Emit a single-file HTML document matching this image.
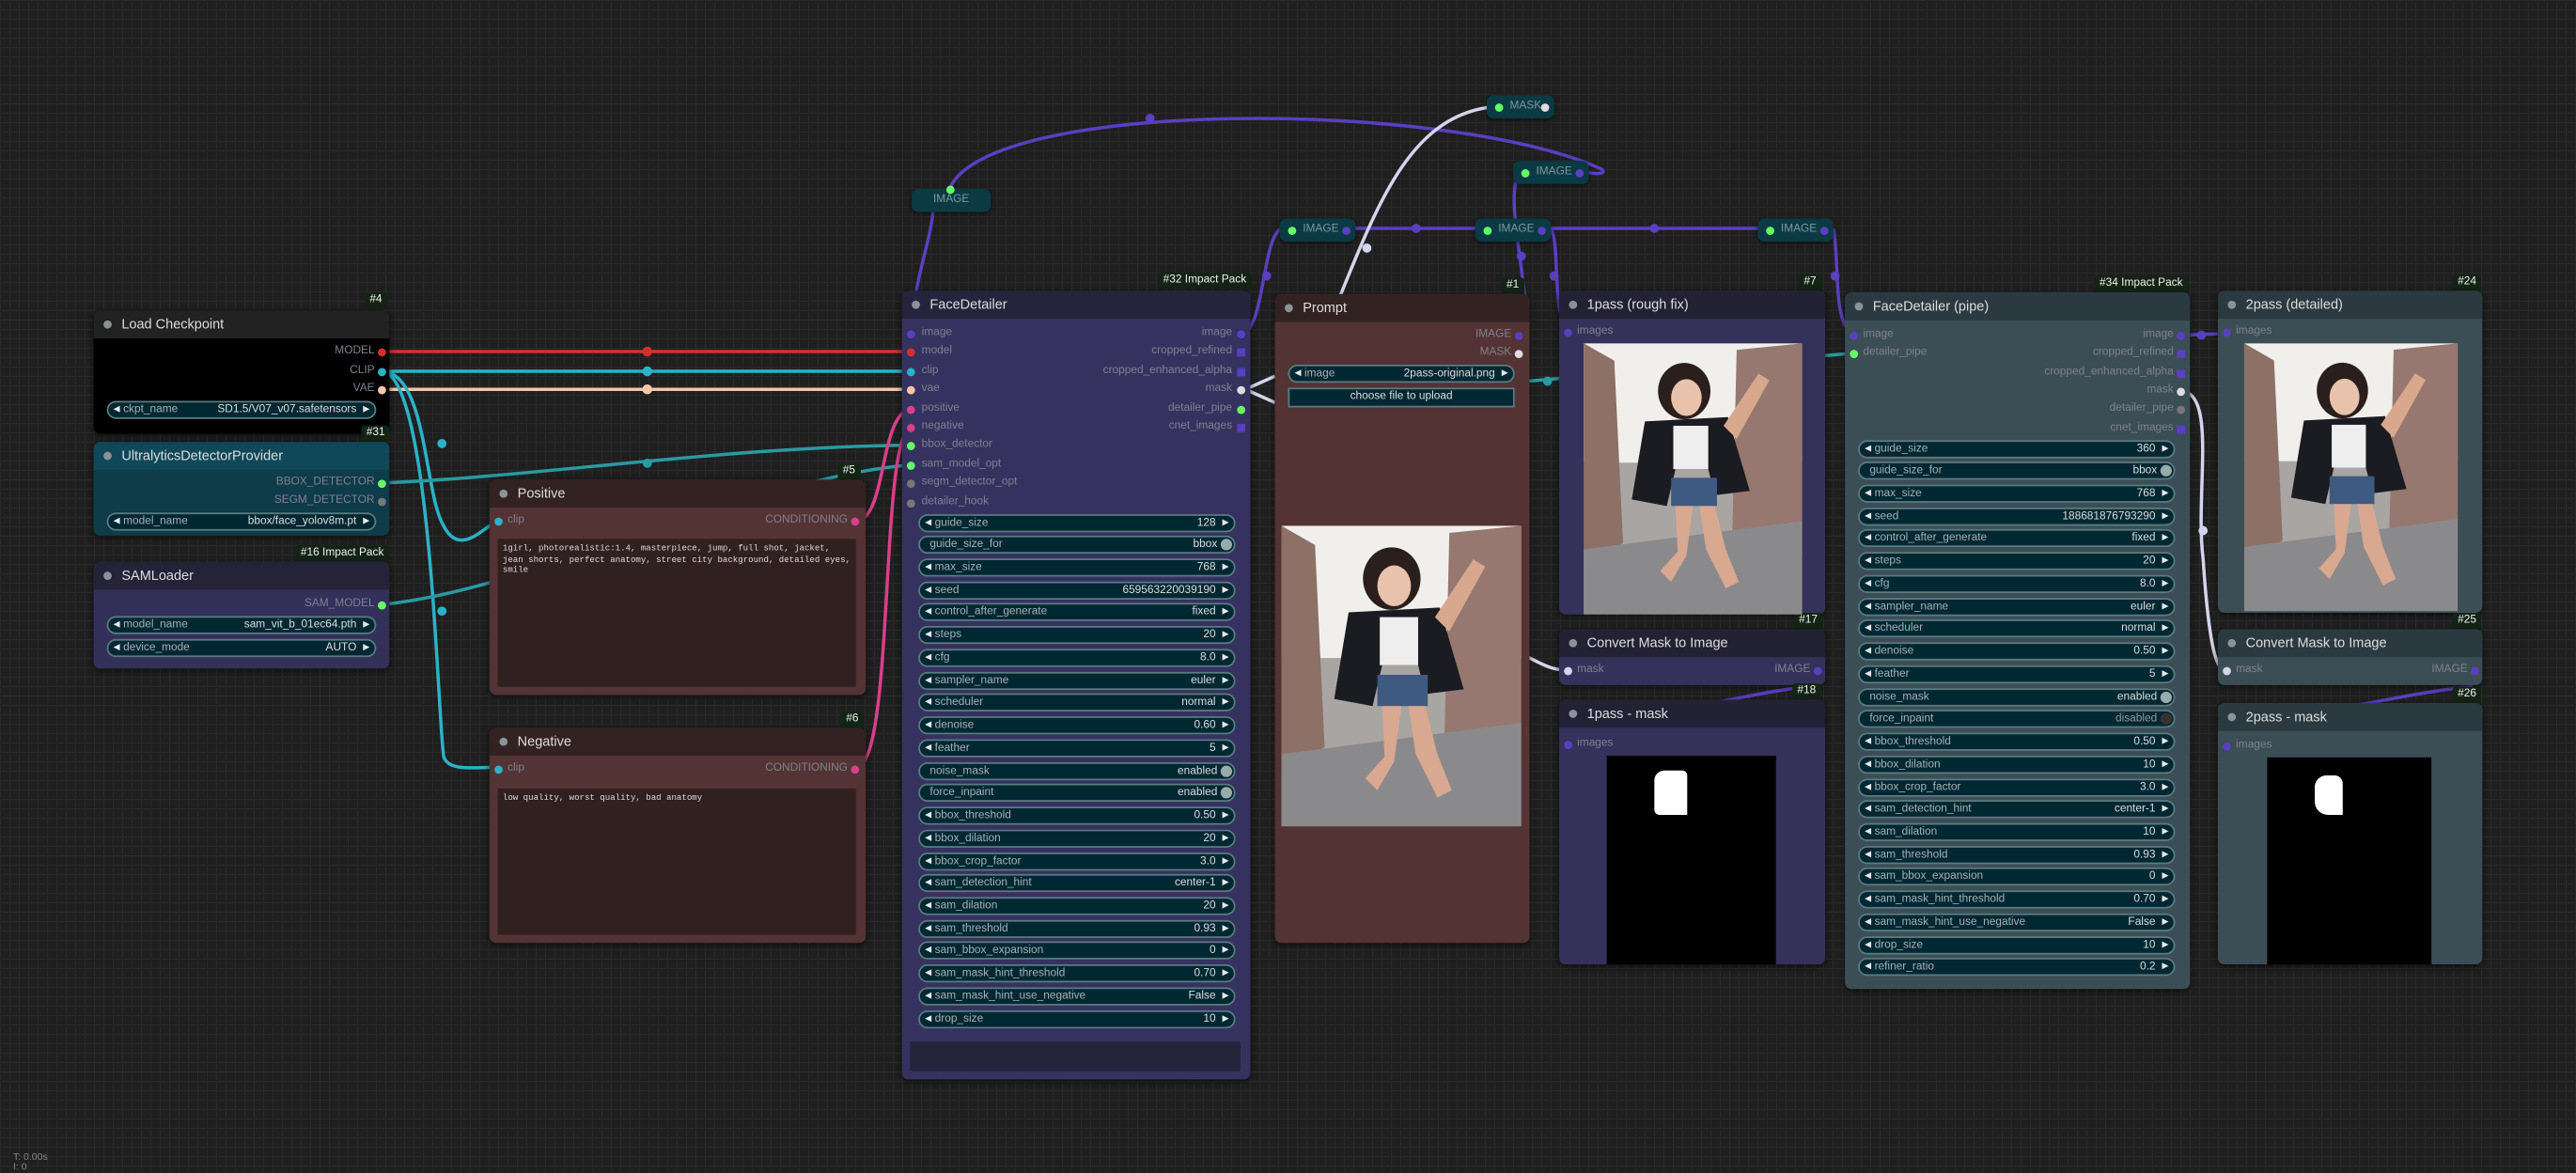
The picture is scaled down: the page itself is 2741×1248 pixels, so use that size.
<!DOCTYPE html>
<html><head><meta charset="utf-8"><style>
html,body{margin:0;padding:0;width:2741px;height:1248px;overflow:hidden;background:#202020}
body{background-color:#1f1f1f;background-image:linear-gradient(#292929 1px,transparent 1px),linear-gradient(90deg,#292929 1px,transparent 1px);background-size:10px 10px}
#c{position:absolute;left:0;top:0;width:1568px;height:714px;transform:scale(1.74809,1.74790);transform-origin:0 0;font-family:"Liberation Sans",sans-serif}
.n{position:absolute;border-radius:4px;overflow:hidden;box-shadow:0 1px 4px rgba(0,0,0,.6)}
.t{position:absolute;left:0;right:0;top:0;height:17px;font-size:8.3px;line-height:17px;color:#ddd;padding-left:17px;box-sizing:border-box;white-space:nowrap}
.t:before{content:"";position:absolute;left:6px;top:6px;width:5px;height:5px;border-radius:50%;background:#8a9496}
.b{position:absolute;left:0;right:0;top:17px;bottom:0}
.bd{position:absolute;height:10px;padding:0 3px;font-size:6.8px;line-height:10px;color:#eee;background:#142414;border-radius:2px 2px 0 0;white-space:nowrap}
.s{position:absolute;font-size:6.8px;line-height:8px;color:#80808e;white-space:nowrap}
.d{position:absolute;width:5px;height:5px;border-radius:50%;top:1.5px}
.w{position:absolute;height:11px;border:1px solid #5c7b80;border-radius:6px;background:#002833;box-sizing:border-box;font-size:6.8px;line-height:9px;color:#a8b0b4;white-space:nowrap}
.w .l{position:absolute;left:9px}.w .v{position:absolute;right:11px;color:#ddd}
.w.tg .l{left:6px}.w.tg .v{right:10px}
.la{position:absolute;left:3px;top:2px;width:0;height:0;border-right:4px solid #e8e8e8;border-top:2.5px solid transparent;border-bottom:2.5px solid transparent}
.ra{position:absolute;right:3px;top:2px;width:0;height:0;border-left:4px solid #e8e8e8;border-top:2.5px solid transparent;border-bottom:2.5px solid transparent}
.k{position:absolute;right:1.5px;top:1px;width:7px;height:7px;border-radius:50%;background:#9aa}
.rr{position:absolute;height:14px;border-radius:4px;background:#0b3a45;font-size:6.8px;line-height:14px;color:#7d969c;box-shadow:0 1px 3px rgba(0,0,0,.5)}
.img{position:absolute}
</style></head><body><div id="c">

<svg width="1568" height="714" style="position:absolute;left:0;top:0" fill="none" stroke-width="2">
<path d="M232 214 L555 214" stroke="#d43030"/><circle cx="394" cy="214" r="3" fill="#d43030"/>
<path d="M232 226 L555 226" stroke="#2ab3c8"/><circle cx="394" cy="226" r="3" fill="#2ab3c8"/>
<path d="M232 237 L555 237" stroke="#f3c8a8"/><circle cx="394" cy="237" r="3" fill="#f3c8a8"/>
<path d="M232 226 C260 226 258 300 270 320 C280 340 295 320 303 317" stroke="#2ab3c8"/><circle cx="269" cy="270" r="2.8" fill="#2ab3c8"/>
<path d="M232 226 C262 226 266 430 270 460 C272 470 290 467 303 467" stroke="#2ab3c8"/><circle cx="269" cy="372" r="2.8" fill="#2ab3c8"/>
<path d="M232 294 C330 290 440 272 555 271" stroke="#2a9aa2"/><circle cx="394" cy="282" r="2.8" fill="#2a9aa2"/>
<path d="M232 368 C320 360 460 290 555 283" stroke="#2a9aa2"/>
<path d="M521 317 C540 317 535 250 555 249" stroke="#d8408a"/>
<path d="M521 467 C545 467 535 262 555 260" stroke="#d8408a"/>
<path d="M578 115 C600 60 880 60 975 103 C978 106 972 106 967 105" stroke="#5a3fc0"/><circle cx="700" cy="72" r="2.8" fill="#5a3fc0"/>
<path d="M568 128 C566 150 556 170 555 203" stroke="#5a3fc0"/>
<path d="M756 203 C770 200 768 145 780 139" stroke="#5a3fc0"/><circle cx="771" cy="168" r="2.8" fill="#5a3fc0"/>
<path d="M824 139 L898 139" stroke="#5a3fc0"/><circle cx="862" cy="139" r="2.8" fill="#5a3fc0"/>
<path d="M944 139 L1070 139" stroke="#5a3fc0"/><circle cx="1007" cy="139" r="2.8" fill="#5a3fc0"/>
<path d="M924 106 C918 120 925 150 928 180 C930 195 928 204 926 204" stroke="#5a3fc0"/><circle cx="926" cy="156" r="2.8" fill="#5a3fc0"/>
<path d="M944 139 C950 150 944 190 955 203" stroke="#5a3fc0"/><circle cx="946" cy="168" r="2.8" fill="#5a3fc0"/>
<path d="M1116 139 C1120 160 1115 195 1128 204" stroke="#5a3fc0"/><circle cx="1117" cy="168" r="2.8" fill="#5a3fc0"/>
<path d="M1327 204 L1355 203" stroke="#5a3fc0"/><circle cx="1340" cy="204" r="2.8" fill="#5a3fc0"/>
<path d="M1505 418 C1480 420 1460 425 1430 430" stroke="#5a3fc0"/>
<path d="M1100 418 C1080 420 1060 425 1030 430" stroke="#5a3fc0"/>
<path d="M909 65 C860 70 840 120 815 182" stroke="#d4d4ec"/><circle cx="832" cy="151" r="2.8" fill="#d4d4ec"/>
<path d="M776 229 L758 237 L776 245" stroke="#d4d4ec"/>
<path d="M1327 238 C1350 238 1336 300 1341 340 C1345 400 1350 408 1355 408" stroke="#d4d4ec"/><circle cx="1341" cy="323" r="2.8" fill="#d4d4ec"/>
<path d="M930 400 C940 405 945 408 955 408" stroke="#d4d4ec"/>
<path d="M930 232 L1128 215" stroke="#2a9aa2"/><circle cx="942" cy="232" r="2.8" fill="#2a9aa2"/>
</svg>

<div class="rr" style="left:555px;top:115px;width:48px;text-align:center">IMAGE</div>
<div class="rr" style="left:905px;top:58px;width:41px;padding-left:14px;box-sizing:border-box">MASK<span class="d" style="left:5px;top:4.5px;background:#6f6"></span><span class="d" style="right:3px;top:4.5px;background:#ddd"></span></div>
<div class="rr" style="left:921px;top:98px;width:46px;padding-left:14px;box-sizing:border-box">IMAGE<span class="d" style="left:5px;top:4.5px;background:#6f6"></span><span class="d" style="right:3px;top:4.5px;background:#5a3fc0"></span></div>
<div class="rr" style="left:779px;top:133px;width:46px;padding-left:14px;box-sizing:border-box">IMAGE<span class="d" style="left:5px;top:4.5px;background:#6f6"></span><span class="d" style="right:3px;top:4.5px;background:#5a3fc0"></span></div>
<div class="rr" style="left:898px;top:133px;width:46px;padding-left:14px;box-sizing:border-box">IMAGE<span class="d" style="left:5px;top:4.5px;background:#6f6"></span><span class="d" style="right:3px;top:4.5px;background:#5a3fc0"></span></div>
<div class="rr" style="left:1070px;top:133px;width:46px;padding-left:14px;box-sizing:border-box">IMAGE<span class="d" style="left:5px;top:4.5px;background:#6f6"></span><span class="d" style="right:3px;top:4.5px;background:#5a3fc0"></span></div>
<span class="d" style="left:575.5px;top:112.5px;background:#6f6"></span>

<div class="bd" style="left:222px;top:178px">#4</div>
<div class="n" style="left:57px;top:189px;width:180px;height:75px;background:#000"><div class="t" style="background:#222">Load Checkpoint</div></div>
<div class="s" style="right:1340px;top:210px">MODEL</div><span class="d" style="left:230px;top:211.5px;background:#d43030"></span>
<div class="s" style="right:1340px;top:222px">CLIP</div><span class="d" style="left:230px;top:223.5px;background:#2ab3c8"></span>
<div class="s" style="right:1340px;top:233px">VAE</div><span class="d" style="left:230px;top:234.5px;background:#f3c8a8"></span>
<div class="w" style="left:65px;top:243.5px;width:164px"><i class="la"></i><span class="l">ckpt_name</span><span class="v">SD1.5/V07_v07.safetensors</span><i class="ra"></i></div>

<div class="bd" style="left:220px;top:259px">#31</div>
<div class="n" style="left:57px;top:269px;width:180px;height:57px;background:#0e3c48"><div class="t" style="background:#0f4858">UltralyticsDetectorProvider</div></div>
<div class="s" style="right:1340px;top:290px">BBOX_DETECTOR</div><span class="d" style="left:230px;top:291.5px;background:#6f6"></span>
<div class="s" style="right:1340px;top:301px">SEGM_DETECTOR</div><span class="d" style="left:230px;top:302.5px;background:#777"></span>
<div class="w" style="left:65px;top:312px;width:164px"><i class="la"></i><span class="l">model_name</span><span class="v">bbox/face_yolov8m.pt</span><i class="ra"></i></div>

<div class="bd" style="left:180px;top:332px">#16 Impact Pack</div>
<div class="n" style="left:57px;top:342px;width:180px;height:65px;background:#33305a"><div class="t" style="background:#242338">SAMLoader</div></div>
<div class="s" style="right:1340px;top:364px">SAM_MODEL</div><span class="d" style="left:230px;top:365.5px;background:#6f6"></span>
<div class="w" style="left:65px;top:375px;width:164px"><i class="la"></i><span class="l">model_name</span><span class="v">sam_vit_b_01ec64.pth</span><i class="ra"></i></div>
<div class="w" style="left:65px;top:389px;width:164px"><i class="la"></i><span class="l">device_mode</span><span class="v">AUTO</span><i class="ra"></i></div>

<div class="bd" style="left:510px;top:282px">#5</div>
<div class="n" style="left:298px;top:292px;width:229px;height:131px;background:#533333"><div class="t" style="background:#332222">Positive</div>
<div style="position:absolute;left:5px;top:36px;width:218px;height:90px;background:#302020;color:#ddd;font-family:'Liberation Mono',monospace;font-size:5.2px;line-height:6.5px;padding:3px;box-sizing:border-box">1girl, photorealistic:1.4, masterpiece, jump, full shot, jacket, jean shorts, perfect anatomy, street city background, detailed eyes, smile</div></div>
<span class="d" style="left:301px;top:314.5px;background:#2ab3c8"></span><div class="s" style="left:309px;top:313px">clip</div>
<div class="s" style="right:1052px;top:313px">CONDITIONING</div><span class="d" style="left:518px;top:314.5px;background:#d8408a"></span>

<div class="bd" style="left:512px;top:433px">#6</div>
<div class="n" style="left:298px;top:443px;width:229px;height:131px;background:#533333"><div class="t" style="background:#332222">Negative</div>
<div style="position:absolute;left:5px;top:37px;width:218px;height:89px;background:#302020;color:#ddd;font-family:'Liberation Mono',monospace;font-size:5.2px;line-height:6.5px;padding:3px;box-sizing:border-box">low quality, worst quality, bad anatomy</div></div>
<span class="d" style="left:301px;top:465.5px;background:#2ab3c8"></span><div class="s" style="left:309px;top:464px">clip</div>
<div class="s" style="right:1052px;top:464px">CONDITIONING</div><span class="d" style="left:518px;top:465.5px;background:#d8408a"></span>

<div class="bd" style="left:705px;top:166px">#32 Impact Pack</div>
<div class="n" style="left:549px;top:177px;width:212px;height:480px;background:#353260"><div class="t" style="background:#25243c">FaceDetailer</div>
<div style="position:absolute;left:5px;top:457px;width:201px;height:18px;background:#25233a"></div></div>
<span class="d" style="left:552px;top:200.5px;background:#5a3fc0"></span><div class="s" style="left:561px;top:199px">image</div>
<span class="d" style="left:552px;top:211.5px;background:#d43030"></span><div class="s" style="left:561px;top:210px">model</div>
<span class="d" style="left:552px;top:223.5px;background:#2ab3c8"></span><div class="s" style="left:561px;top:222px">clip</div>
<span class="d" style="left:552px;top:234.5px;background:#f3c8a8"></span><div class="s" style="left:561px;top:233px">vae</div>
<span class="d" style="left:552px;top:246.5px;background:#d8408a"></span><div class="s" style="left:561px;top:245px">positive</div>
<span class="d" style="left:552px;top:257.5px;background:#d8408a"></span><div class="s" style="left:561px;top:256px">negative</div>
<span class="d" style="left:552px;top:268.5px;background:#6f6"></span><div class="s" style="left:561px;top:267px">bbox_detector</div>
<span class="d" style="left:552px;top:280.5px;background:#6f6"></span><div class="s" style="left:561px;top:279px">sam_model_opt</div>
<span class="d" style="left:552px;top:291.5px;background:#777"></span><div class="s" style="left:561px;top:290px">segm_detector_opt</div>
<span class="d" style="left:552px;top:303.5px;background:#777"></span><div class="s" style="left:561px;top:302px">detailer_hook</div>
<div class="s" style="right:818px;top:199px">image</div><span class="d" style="left:753px;top:200.5px;background:#5a3fc0"></span>
<div class="s" style="right:818px;top:210px">cropped_refined</div><span class="d" style="left:753px;top:211.5px;background:#5a3fc0;border-radius:0"></span>
<div class="s" style="right:818px;top:222px">cropped_enhanced_alpha</div><span class="d" style="left:753px;top:223.5px;background:#5a3fc0;border-radius:0"></span>
<div class="s" style="right:818px;top:233px">mask</div><span class="d" style="left:753px;top:234.5px;background:#ddd"></span>
<div class="s" style="right:818px;top:245px">detailer_pipe</div><span class="d" style="left:753px;top:246.5px;background:#6f6"></span>
<div class="s" style="right:818px;top:256px">cnet_images</div><span class="d" style="left:753px;top:257.5px;background:#5a3fc0;border-radius:0"></span>

<div class="w" style="left:559px;top:312.5px;width:193px"><i class="la"></i><span class="l">guide_size</span><span class="v">128</span><i class="ra"></i></div>
<div class="w tg" style="left:559px;top:326.2px;width:193px"><span class="l">guide_size_for</span><span class="v">bbox</span><i class="k"></i></div>
<div class="w" style="left:559px;top:340px;width:193px"><i class="la"></i><span class="l">max_size</span><span class="v">768</span><i class="ra"></i></div>
<div class="w" style="left:559px;top:353.7px;width:193px"><i class="la"></i><span class="l">seed</span><span class="v">659563220039190</span><i class="ra"></i></div>
<div class="w" style="left:559px;top:367.4px;width:193px"><i class="la"></i><span class="l">control_after_generate</span><span class="v">fixed</span><i class="ra"></i></div>
<div class="w" style="left:559px;top:381.2px;width:193px"><i class="la"></i><span class="l">steps</span><span class="v">20</span><i class="ra"></i></div>
<div class="w" style="left:559px;top:394.9px;width:193px"><i class="la"></i><span class="l">cfg</span><span class="v">8.0</span><i class="ra"></i></div>
<div class="w" style="left:559px;top:408.6px;width:193px"><i class="la"></i><span class="l">sampler_name</span><span class="v">euler</span><i class="ra"></i></div>
<div class="w" style="left:559px;top:422.3px;width:193px"><i class="la"></i><span class="l">scheduler</span><span class="v">normal</span><i class="ra"></i></div>
<div class="w" style="left:559px;top:436.1px;width:193px"><i class="la"></i><span class="l">denoise</span><span class="v">0.60</span><i class="ra"></i></div>
<div class="w" style="left:559px;top:449.8px;width:193px"><i class="la"></i><span class="l">feather</span><span class="v">5</span><i class="ra"></i></div>
<div class="w tg" style="left:559px;top:463.5px;width:193px"><span class="l">noise_mask</span><span class="v">enabled</span><i class="k"></i></div>
<div class="w tg" style="left:559px;top:477.3px;width:193px"><span class="l">force_inpaint</span><span class="v">enabled</span><i class="k"></i></div>
<div class="w" style="left:559px;top:491px;width:193px"><i class="la"></i><span class="l">bbox_threshold</span><span class="v">0.50</span><i class="ra"></i></div>
<div class="w" style="left:559px;top:504.7px;width:193px"><i class="la"></i><span class="l">bbox_dilation</span><span class="v">20</span><i class="ra"></i></div>
<div class="w" style="left:559px;top:518.5px;width:193px"><i class="la"></i><span class="l">bbox_crop_factor</span><span class="v">3.0</span><i class="ra"></i></div>
<div class="w" style="left:559px;top:532.2px;width:193px"><i class="la"></i><span class="l">sam_detection_hint</span><span class="v">center-1</span><i class="ra"></i></div>
<div class="w" style="left:559px;top:545.9px;width:193px"><i class="la"></i><span class="l">sam_dilation</span><span class="v">20</span><i class="ra"></i></div>
<div class="w" style="left:559px;top:559.6px;width:193px"><i class="la"></i><span class="l">sam_threshold</span><span class="v">0.93</span><i class="ra"></i></div>
<div class="w" style="left:559px;top:573.4px;width:193px"><i class="la"></i><span class="l">sam_bbox_expansion</span><span class="v">0</span><i class="ra"></i></div>
<div class="w" style="left:559px;top:587.1px;width:193px"><i class="la"></i><span class="l">sam_mask_hint_threshold</span><span class="v">0.70</span><i class="ra"></i></div>
<div class="w" style="left:559px;top:600.8px;width:193px"><i class="la"></i><span class="l">sam_mask_hint_use_negative</span><span class="v">False</span><i class="ra"></i></div>
<div class="w" style="left:559px;top:614.6px;width:193px"><i class="la"></i><span class="l">drop_size</span><span class="v">10</span><i class="ra"></i></div>

<div class="bd" style="left:914px;top:169px">#1</div>
<div class="n" style="left:776px;top:179px;width:155px;height:395px;background:#533333"><div class="t" style="background:#332222">Prompt</div></div>
<div class="s" style="right:648px;top:200px">IMAGE</div><span class="d" style="left:922px;top:201.5px;background:#5a3fc0"></span>
<div class="s" style="right:648px;top:211px">MASK</div><span class="d" style="left:922px;top:212.5px;background:#ddd"></span>
<div class="w" style="left:784px;top:222px;width:138px"><i class="la"></i><span class="l">image</span><span class="v">2pass-original.png</span><i class="ra"></i></div>
<div style="position:absolute;left:784px;top:236px;width:138px;height:12px;background:#002833;border:1px solid #5c7b80;box-sizing:border-box;font-size:6.8px;line-height:10px;color:#ddd;text-align:center">choose file to upload</div>

<div class="bd" style="left:1095px;top:167px">#7</div>
<div class="n" style="left:949px;top:177px;width:162px;height:197px;background:#34325a"><div class="t" style="background:#232234">1pass (rough fix)</div></div>
<span class="d" style="left:952px;top:199.5px;background:#5a3fc0"></span><div class="s" style="left:960px;top:198px">images</div>

<div class="bd" style="left:1092px;top:373px">#17</div>
<div class="n" style="left:949px;top:383px;width:162px;height:34px;background:#34325a"><div class="t" style="background:#232234">Convert Mask to Image</div></div>
<span class="d" style="left:952px;top:405.5px;background:#d4d4ec"></span><div class="s" style="left:960px;top:404px">mask</div>
<div class="s" style="right:466px;top:404px">IMAGE</div><span class="d" style="left:1104px;top:405.5px;background:#5a3fc0"></span>

<div class="bd" style="left:1091px;top:416px">#18</div>
<div class="n" style="left:949px;top:426px;width:162px;height:161px;background:#34325a"><div class="t" style="background:#232234">1pass - mask</div>
<div style="position:absolute;left:29px;top:34px;width:103px;height:127px;background:#000"><div style="position:absolute;left:29px;top:9px;width:20px;height:27px;background:#fff;border-radius:6px 3px 0 3px"></div></div></div>
<span class="d" style="left:952px;top:450.5px;background:#5a3fc0"></span><div class="s" style="left:960px;top:449px">images</div>

<div class="bd" style="left:1275px;top:168px">#34 Impact Pack</div>
<div class="n" style="left:1123px;top:178px;width:210px;height:424px;background:#3b4e56"><div class="t" style="background:#2b3a40">FaceDetailer (pipe)</div></div>
<span class="d" style="left:1126px;top:201.5px;background:#5a3fc0"></span><div class="s" style="left:1134px;top:200px">image</div>
<span class="d" style="left:1126px;top:212.5px;background:#6f6"></span><div class="s" style="left:1134px;top:211px">detailer_pipe</div>
<div class="s" style="right:245px;top:200px">image</div><span class="d" style="left:1325px;top:201.5px;background:#5a3fc0"></span>
<div class="s" style="right:245px;top:211px">cropped_refined</div><span class="d" style="left:1325px;top:212.5px;background:#5a3fc0;border-radius:0"></span>
<div class="s" style="right:245px;top:223px">cropped_enhanced_alpha</div><span class="d" style="left:1325px;top:224.5px;background:#5a3fc0;border-radius:0"></span>
<div class="s" style="right:245px;top:234px">mask</div><span class="d" style="left:1325px;top:235.5px;background:#ddd"></span>
<div class="s" style="right:245px;top:245px">detailer_pipe</div><span class="d" style="left:1325px;top:246.5px;background:#777"></span>
<div class="s" style="right:245px;top:257px">cnet_images</div><span class="d" style="left:1325px;top:258.5px;background:#5a3fc0;border-radius:0"></span>

<div class="w" style="left:1131px;top:267.5px;width:193px"><i class="la"></i><span class="l">guide_size</span><span class="v">360</span><i class="ra"></i></div>
<div class="w tg" style="left:1131px;top:281.2px;width:193px"><span class="l">guide_size_for</span><span class="v">bbox</span><i class="k"></i></div>
<div class="w" style="left:1131px;top:295px;width:193px"><i class="la"></i><span class="l">max_size</span><span class="v">768</span><i class="ra"></i></div>
<div class="w" style="left:1131px;top:308.7px;width:193px"><i class="la"></i><span class="l">seed</span><span class="v">188681876793290</span><i class="ra"></i></div>
<div class="w" style="left:1131px;top:322.4px;width:193px"><i class="la"></i><span class="l">control_after_generate</span><span class="v">fixed</span><i class="ra"></i></div>
<div class="w" style="left:1131px;top:336.2px;width:193px"><i class="la"></i><span class="l">steps</span><span class="v">20</span><i class="ra"></i></div>
<div class="w" style="left:1131px;top:349.9px;width:193px"><i class="la"></i><span class="l">cfg</span><span class="v">8.0</span><i class="ra"></i></div>
<div class="w" style="left:1131px;top:363.6px;width:193px"><i class="la"></i><span class="l">sampler_name</span><span class="v">euler</span><i class="ra"></i></div>
<div class="w" style="left:1131px;top:377.3px;width:193px"><i class="la"></i><span class="l">scheduler</span><span class="v">normal</span><i class="ra"></i></div>
<div class="w" style="left:1131px;top:391.1px;width:193px"><i class="la"></i><span class="l">denoise</span><span class="v">0.50</span><i class="ra"></i></div>
<div class="w" style="left:1131px;top:404.8px;width:193px"><i class="la"></i><span class="l">feather</span><span class="v">5</span><i class="ra"></i></div>
<div class="w tg" style="left:1131px;top:418.5px;width:193px"><span class="l">noise_mask</span><span class="v">enabled</span><i class="k"></i></div>
<div class="w tg" style="left:1131px;top:432.3px;width:193px"><span class="l">force_inpaint</span><span class="v" style="color:#999">disabled</span><i class="k" style="background:#3a3030"></i></div>
<div class="w" style="left:1131px;top:446px;width:193px"><i class="la"></i><span class="l">bbox_threshold</span><span class="v">0.50</span><i class="ra"></i></div>
<div class="w" style="left:1131px;top:459.7px;width:193px"><i class="la"></i><span class="l">bbox_dilation</span><span class="v">10</span><i class="ra"></i></div>
<div class="w" style="left:1131px;top:473.5px;width:193px"><i class="la"></i><span class="l">bbox_crop_factor</span><span class="v">3.0</span><i class="ra"></i></div>
<div class="w" style="left:1131px;top:487.2px;width:193px"><i class="la"></i><span class="l">sam_detection_hint</span><span class="v">center-1</span><i class="ra"></i></div>
<div class="w" style="left:1131px;top:500.9px;width:193px"><i class="la"></i><span class="l">sam_dilation</span><span class="v">10</span><i class="ra"></i></div>
<div class="w" style="left:1131px;top:514.6px;width:193px"><i class="la"></i><span class="l">sam_threshold</span><span class="v">0.93</span><i class="ra"></i></div>
<div class="w" style="left:1131px;top:528.4px;width:193px"><i class="la"></i><span class="l">sam_bbox_expansion</span><span class="v">0</span><i class="ra"></i></div>
<div class="w" style="left:1131px;top:542.1px;width:193px"><i class="la"></i><span class="l">sam_mask_hint_threshold</span><span class="v">0.70</span><i class="ra"></i></div>
<div class="w" style="left:1131px;top:555.8px;width:193px"><i class="la"></i><span class="l">sam_mask_hint_use_negative</span><span class="v">False</span><i class="ra"></i></div>
<div class="w" style="left:1131px;top:569.6px;width:193px"><i class="la"></i><span class="l">drop_size</span><span class="v">10</span><i class="ra"></i></div>
<div class="w" style="left:1131px;top:583.3px;width:193px"><i class="la"></i><span class="l">refiner_ratio</span><span class="v">0.2</span><i class="ra"></i></div>

<div class="bd" style="left:1493px;top:167px">#24</div>
<div class="n" style="left:1350px;top:177px;width:161px;height:196px;background:#3b4e56"><div class="t" style="background:#2b3a40">2pass (detailed)</div></div>
<span class="d" style="left:1353px;top:199.5px;background:#5a3fc0"></span><div class="s" style="left:1361px;top:198px">images</div>

<div class="bd" style="left:1493px;top:373px">#25</div>
<div class="n" style="left:1350px;top:383px;width:161px;height:34px;background:#3b4e56"><div class="t" style="background:#2b3a40">Convert Mask to Image</div></div>
<span class="d" style="left:1353px;top:405.5px;background:#d4d4ec"></span><div class="s" style="left:1361px;top:404px">mask</div>
<div class="s" style="right:66px;top:404px">IMAGE</div><span class="d" style="left:1504px;top:405.5px;background:#5a3fc0"></span>

<div class="bd" style="left:1493px;top:418px">#26</div>
<div class="n" style="left:1350px;top:428px;width:161px;height:159px;background:#3b4e56"><div class="t" style="background:#2b3a40">2pass - mask</div>
<div style="position:absolute;left:30px;top:33px;width:100px;height:126px;background:#000"><div style="position:absolute;left:29px;top:11px;width:17px;height:24px;background:#fff;border-radius:7px 5px 0 8px"></div></div></div>
<span class="d" style="left:1353px;top:451.5px;background:#5a3fc0"></span><div class="s" style="left:1361px;top:450px">images</div>

<svg class="img" style="left:780px;top:320px" width="146" height="183" viewBox="0 0 100 125" preserveAspectRatio="none">
<rect width="100" height="125" fill="#a9a5a2"/><rect width="100" height="55" fill="#f1efeb"/>
<polygon points="0,0 14,8 18,92 0,104" fill="#8d7066"/><polygon points="100,0 70,3 68,88 100,98" fill="#967870"/>
<polygon points="0,95 100,82 100,125 0,125" fill="#8a8a8c"/>
<polygon points="28,36 66,34 76,68 60,70 57,58 42,58 38,75 22,72" fill="#1b1b22"/>
<polygon points="64,38 80,14 85,17 70,44" fill="#d7a88e"/>
<ellipse cx="46" cy="22" rx="12" ry="13" fill="#2a1f1c"/><ellipse cx="47" cy="25" rx="7" ry="8.5" fill="#e8c2aa"/>
<rect x="41" y="38" width="16" height="20" fill="#eeeeee"/><rect x="40" y="62" width="21" height="13" fill="#3e5a80"/>
<polygon points="42,75 50,75 47,98 40,110 35,105 43,96" fill="#d9a890"/><polygon points="53,75 60,75 65,95 71,110 65,113 56,95" fill="#d9a890"/>
</svg>
<svg class="img" style="left:964px;top:209px" width="133" height="165" viewBox="0 0 100 125" preserveAspectRatio="none">
<rect width="100" height="125" fill="#a9a5a2"/><rect width="100" height="55" fill="#f1efeb"/>
<polygon points="0,0 14,8 18,92 0,104" fill="#8d7066"/><polygon points="100,0 70,3 68,88 100,98" fill="#967870"/>
<polygon points="0,95 100,82 100,125 0,125" fill="#8a8a8c"/>
<polygon points="28,36 66,34 76,68 60,70 57,58 42,58 38,75 22,72" fill="#1b1b22"/>
<polygon points="64,38 80,14 85,17 70,44" fill="#d7a88e"/>
<ellipse cx="46" cy="22" rx="12" ry="13" fill="#2a1f1c"/><ellipse cx="47" cy="25" rx="7" ry="8.5" fill="#e8c2aa"/>
<rect x="41" y="38" width="16" height="20" fill="#eeeeee"/><rect x="40" y="62" width="21" height="13" fill="#3e5a80"/>
<polygon points="42,75 50,75 47,98 40,110 35,105 43,96" fill="#d9a890"/><polygon points="53,75 60,75 65,95 71,110 65,113 56,95" fill="#d9a890"/>
</svg>
<svg class="img" style="left:1366px;top:209px" width="130" height="163" viewBox="0 0 100 125" preserveAspectRatio="none">
<rect width="100" height="125" fill="#a9a5a2"/><rect width="100" height="55" fill="#f1efeb"/>
<polygon points="0,0 14,8 18,92 0,104" fill="#8d7066"/><polygon points="100,0 70,3 68,88 100,98" fill="#967870"/>
<polygon points="0,95 100,82 100,125 0,125" fill="#8a8a8c"/>
<polygon points="28,36 66,34 76,68 60,70 57,58 42,58 38,75 22,72" fill="#1b1b22"/>
<polygon points="64,38 80,14 85,17 70,44" fill="#d7a88e"/>
<ellipse cx="46" cy="22" rx="12" ry="13" fill="#2a1f1c"/><ellipse cx="47" cy="25" rx="7" ry="8.5" fill="#e8c2aa"/>
<rect x="41" y="38" width="16" height="20" fill="#eeeeee"/><rect x="40" y="62" width="21" height="13" fill="#3e5a80"/>
<polygon points="42,75 50,75 47,98 40,110 35,105 43,96" fill="#d9a890"/><polygon points="53,75 60,75 65,95 71,110 65,113 56,95" fill="#d9a890"/>
</svg>

<div style="position:absolute;left:8px;top:702px;font-size:6px;color:#888;line-height:6px">T: 0.00s<br>I: 0</div>
</div></body></html>
